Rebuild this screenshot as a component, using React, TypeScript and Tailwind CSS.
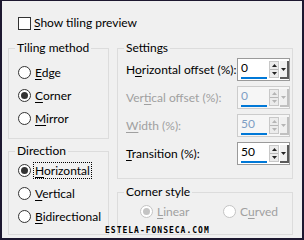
import React from "react";

const font = { fontFamily: 'Lato, "Liberation Sans", sans-serif' };

function Mn({ text, i }: { text: string; i: number }) {
  return (
    <>
      {text.slice(0, i)}
      <span className="underline underline-offset-2">{text[i]}</span>
      {text.slice(i + 1)}
    </>
  );
}

function Radio({
  label,
  u,
  checked = false,
  disabled = false,
  focus = false,
  className = "",
}: {
  label: string;
  u: number;
  checked?: boolean;
  disabled?: boolean;
  focus?: boolean;
  className?: string;
}) {
  return (
    <div className={`flex h-[23px] items-center gap-[3px] ${className}`}>
      <span
        className={`flex h-[13px] w-[13px] items-center justify-center rounded-full border bg-white ${
          disabled ? "border-[#c4c4c4]" : "border-[#333333]"
        }`}
      >
        {checked && (
          <span
            className={`h-[7px] w-[7px] rounded-full ${disabled ? "bg-[#c4c4c4]" : "bg-[#333333]"}`}
          />
        )}
      </span>
      <span
        className={`px-[1px] leading-[15px] ${disabled ? "text-[#a0a0a0]" : "text-black"} ${
          focus ? "outline outline-1 outline-dotted outline-black" : ""
        }`}
      >
        <Mn text={label} i={u} />
      </span>
    </div>
  );
}

function Spinner({ value, disabled = false }: { value: string; disabled?: boolean }) {
  const arrow = disabled ? "#b5b5b5" : "#222";
  return (
    <div
      className={`flex h-[23px] w-[53px] border ${
        disabled ? "border-[#cccccc] bg-[#f6f6f6]" : "border-[#9a9a9a] bg-white"
      }`}
    >
      <div className="flex w-[30px] flex-col justify-between pl-[3px] pt-[2px]">
        <span className={`leading-[14px] ${disabled ? "text-[#7f9ec4]" : "text-black"}`}>{value}</span>
        <div className="mb-[1px] h-[2px] w-[26px] bg-[#0078d7]" />
      </div>
      <div className="ml-[1px] mt-[2px] flex h-[17px] w-[10px] flex-col border border-[#c8c8c8] bg-[#ececec]">
        <div className="flex flex-1 items-center justify-center border-b border-[#b8b8b8]">
          <svg width="5" height="3" viewBox="0 0 5 3">
            <path d="M0 3 L2.5 0 L5 3 Z" fill={arrow} />
          </svg>
        </div>
        <div className="flex flex-1 items-center justify-center">
          <svg width="5" height="3" viewBox="0 0 5 3">
            <path d="M0 0 L2.5 3 L5 0 Z" fill={arrow} />
          </svg>
        </div>
      </div>
      <div
        className={`ml-[1px] mt-[2px] flex h-[18px] w-[9px] items-center justify-center border-b-2 border-r-2 ${
          disabled ? "border-[#c0c0c0]" : "border-[#5a5a5a]"
        } bg-[#f0f0f0]`}
      >
        <svg width="5" height="3" viewBox="0 0 5 3">
          <path d="M0 0 L2.5 3 L5 0 Z" fill={arrow} />
        </svg>
      </div>
    </div>
  );
}

function Row({ label, u, value, disabled = false }: { label: string; u: number; value: string; disabled?: boolean }) {
  return (
    <div className="flex h-[23px] items-center justify-between">
      <span className={disabled ? "text-[#a0a0a0]" : "text-black"}>
        <Mn text={label} i={u} />
      </span>
      <Spinner value={value} disabled={disabled} />
    </div>
  );
}

function Group({
  title,
  className,
  children,
}: {
  title: string;
  className: string;
  children: React.ReactNode;
}) {
  return (
    <fieldset className={`border border-[#dcdcdc] ${className}`}>
      <legend className="ml-[6px] px-[2px] leading-[16px] text-black">{title}</legend>
      {children}
    </fieldset>
  );
}

export default function App() {
  return (
    <div
      className="relative h-[240px] w-[304px] overflow-hidden border-b-2 border-l-2 border-r-2 border-t border-[#1d1830] bg-[#f0f0f0] text-[12px] text-black"
      style={font}
    >
      <div className="mt-[14px] flex h-[16px] items-center gap-[3px] pl-[16px]">
        <span className="h-[13px] w-[13px] border border-[#333333] bg-white" />
        <span className="leading-[16px]">
          <Mn text="Show tiling preview" i={0} />
        </span>
      </div>

      <div className="ml-[6px] mt-[9px] flex gap-[8px]">
        <div className="flex w-[101px] flex-col gap-[4px]">
          <Group title="Tiling method" className="h-[99px]">
            <div className="pl-[9px] pt-[5px]">
              <Radio label="Edge" u={0} />
              <Radio label="Corner" u={0} checked />
              <Radio label="Mirror" u={0} />
            </div>
          </Group>
          <Group title="Direction" className="h-[92px]">
            <div className="pl-[9px]">
              <Radio label="Horizontal" u={0} checked focus />
              <Radio label="Vertical" u={0} />
              <Radio label="Bidirectional" u={0} />
            </div>
          </Group>
        </div>

        <div className="flex w-[176px] flex-col gap-[5px]">
          <Group title="Settings" className="h-[139px]">
            <div className="flex flex-col gap-[5px] pl-[8px] pr-[2px] pt-[2px]">
              <Row label="Horizontal offset (%):" u={1} value="0" />
              <Row label="Vertical offset (%):" u={3} value="0" disabled />
              <Row label="Width (%):" u={0} value="50" disabled />
              <Row label="Transition (%):" u={0} value="50" />
            </div>
          </Group>
          <Group title="Corner style" className="h-[51px]">
            <div className="flex pl-[22px]">
              <Radio label="Linear" u={0} checked disabled className="w-[83px]" />
              <Radio label="Curved" u={1} disabled />
            </div>
          </Group>
        </div>
      </div>

      <div
        className="absolute left-[103px] top-[225px] text-[8px] font-bold leading-[9px] tracking-[1px] text-black"
        style={{ fontFamily: '"DejaVu Sans Mono", monospace' }}
      >
        ESTELA-FONSECA.COM
      </div>
    </div>
  );
}
